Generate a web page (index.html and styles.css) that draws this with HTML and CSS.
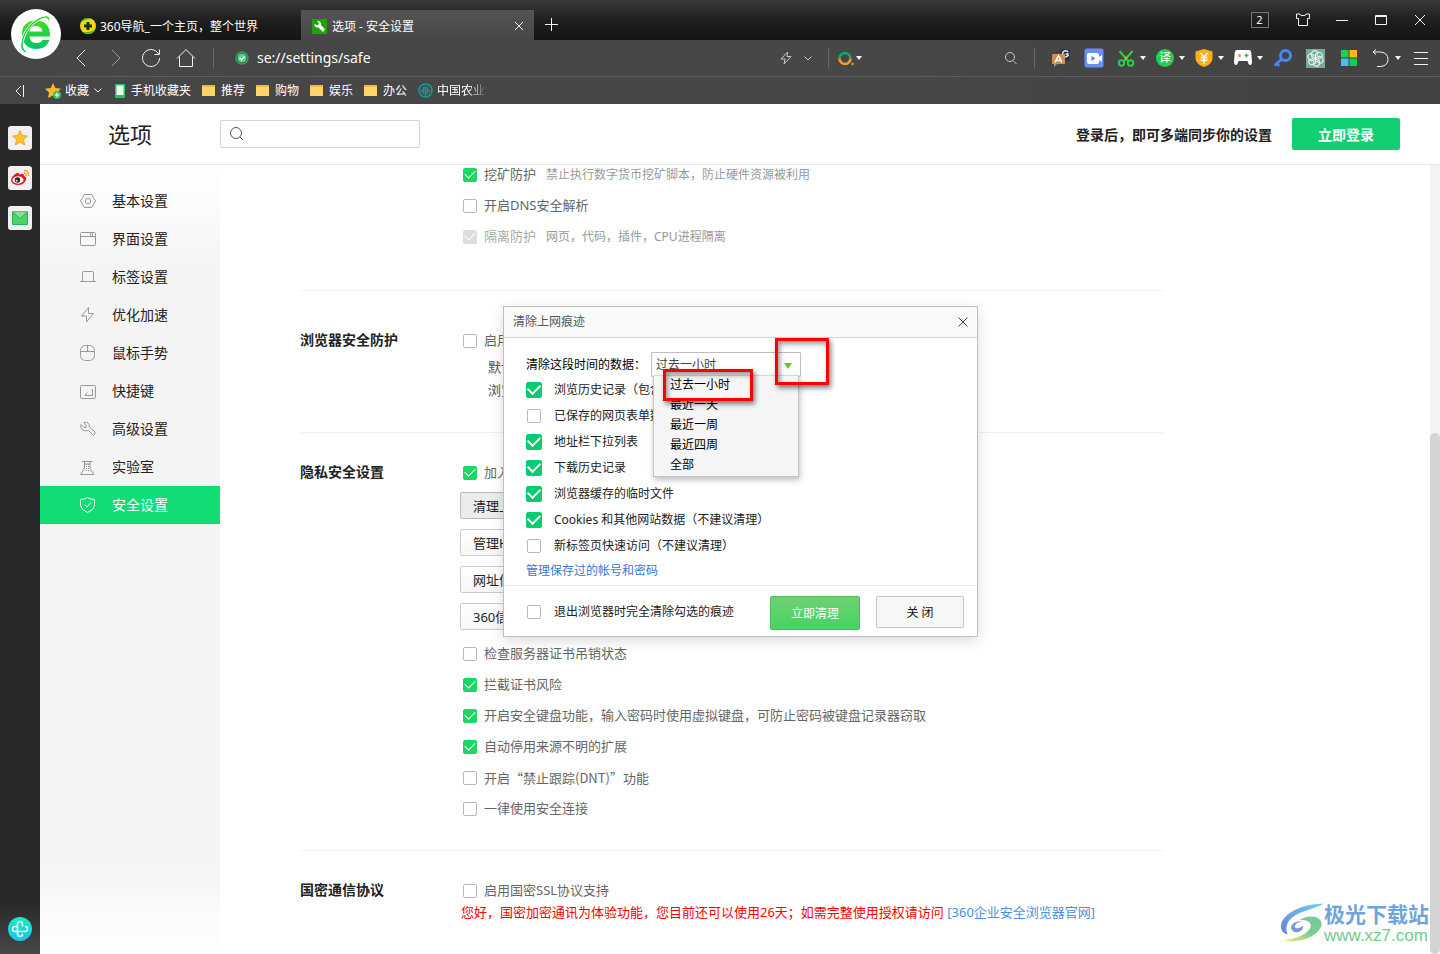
FILE: index.html
```html
<!DOCTYPE html>
<html lang="zh-CN">
<head>
<meta charset="utf-8">
<title>选项 - 安全设置</title>
<link rel="stylesheet" href="styles.css">
</head>
<body>
<header class="chrome">
  <div class="tabbar">
    <div class="brand">
      <svg width="50" height="50" viewBox="0 0 50 50"><defs><linearGradient id="eg" x1="0" y1="0" x2="0" y2="1"><stop offset="0" stop-color="#3fdc1f"/><stop offset="1" stop-color="#00c864"/></linearGradient></defs><circle cx="25" cy="25" r="25" fill="#fff"/><path d="M11 25C11 16 17 11.500 25 11.500C33.500 11.500 39.500 17 39 27.500H18.500C19 32 21.500 34 25.500 34C28.500 34 30.500 33 31.500 31H38.500C36.500 37 31.500 40 25.500 40C16.500 40 11 34 11 25ZM18.500 22.500H31.500C31 19 29 17 25 17C21.500 17 19 19 18.500 22.500Z" fill="url(#eg)"/><path d="M36.500 15C38.500 9 35 8 30 10.500C21 14.500 14 24 12.500 32C11.500 38 13 42 17.500 43C10.500 45 8.500 39 10.500 31C13 20 22 10.500 31 7.500C38.500 5 40.500 9 36.500 15Z" fill="url(#eg)" stroke="#fff" stroke-width="1"/></svg>
    </div>
    <div class="tab">
      <svg width="16" height="16" viewBox="0 0 16 16"><circle cx="8" cy="8" r="8" fill="#f7d51d"/><path d="M1 4A8 8 0 0 1 11 0.500Q5 1 1 4ZM3 14A8 8 0 0 0 15 11Q10 15 3 14Z" fill="#3fb41c"/><path d="M6.500 4H9.500V6.500H12V9.500H9.500V12H6.500V9.500H4V6.500H6.500Z" fill="#153b14"/></svg>
      <span>360导航_一个主页，整个世界</span>
    </div>
    <div class="tab tab-active">
      <svg width="15" height="15" viewBox="0 0 15 15"><rect width="15" height="15" fill="#1fa30c"/><path d="M2.500 4.500L4.500 6.500L6.500 5.500L6.500 3.500L5 2C8 1.500 9.500 3.500 9 6L13 10.500L11 13L6.500 8.500C4 9 2 7.500 2.500 4.500Z" fill="#fff"/></svg>
      <span class="tab-title">选项 - 安全设置</span>
      <button class="bare" aria-label="关闭标签"><svg width="10" height="10" viewBox="0 0 10 10" class="line"><path d="M1 1L9 9M9 1L1 9"/></svg></button>
    </div>
    <button class="bare new-tab" aria-label="新标签"><svg width="13" height="13" viewBox="0 0 13 13" class="line"><path d="M6.500 0V13M0 6.500H13"/></svg></button>
    <div class="window-buttons">
      <button class="bare" aria-label="标签数"><span class="tab-count">2</span></button>
      <button class="bare" aria-label="皮肤"><svg width="16" height="14" viewBox="0 0 16 14" class="line"><path d="M5 1H1.500V5.500H3.500V12.500H12.500V5.500H14.500V1H11L10 2.500H6Z"/></svg></button>
      <button class="bare" aria-label="最小化"><svg width="12" height="12" viewBox="0 0 12 12" class="line"><path d="M0 6.500H12"/></svg></button>
      <button class="bare" aria-label="最大化"><svg width="12" height="10" viewBox="0 0 12 10" class="line"><path d="M.5 .5H11.500V9.500H.5ZM0 1.500H12"/></svg></button>
      <button class="bare" aria-label="关闭"><svg width="12" height="12" viewBox="0 0 12 12" class="line"><path d="M1 1L11 11M11 1L1 11"/></svg></button>
    </div>
  </div>

  <div class="navbar">
    <button class="bare nav-btn" aria-label="后退"><svg width="12" height="18" viewBox="0 0 12 18" class="line"><path d="M10 1L2 9L10 17"/></svg></button>
    <button class="bare nav-btn dim" aria-label="前进"><svg width="12" height="18" viewBox="0 0 12 18" class="line"><path d="M2 1L10 9L2 17"/></svg></button>
    <button class="bare nav-btn" aria-label="刷新"><svg width="20" height="20" viewBox="0 0 20 20" class="line"><path d="M18.500 10A8.500 8.500 0 1 1 16 4L18 6M18.500 1.500V6.500H13.500"/></svg></button>
    <button class="bare nav-btn" aria-label="主页"><svg width="20" height="20" viewBox="0 0 20 20" class="line"><path d="M1 10.500L10 1.500L19 10.500M3.500 8.500V18.500H16.500V8.500"/></svg></button>
    <span class="sep"></span>
    <div class="address">
      <svg width="14" height="14" viewBox="0 0 14 14"><circle cx="7" cy="7" r="6" fill="none" stroke="#3c9c62" stroke-width="1.500"/><circle cx="7" cy="7" r="4.500" fill="#56d488"/><path d="M4.800 7L6.500 8.700L9.400 5.500" fill="none" stroke="#fff" stroke-width="1.300"/></svg>
      <input class="address-input" aria-label="地址" value="se://settings/safe">
      <svg width="12" height="14" viewBox="0 0 12 14" class="line soft"><path d="M7.500 1L1 8H5L4 13L11 5.500H7Z"/></svg>
      <svg width="8" height="5" viewBox="0 0 8 5" class="line soft"><path d="M.5 .5L4 4L7.500 .5"/></svg>
    </div>
    <span class="sep"></span>
    <div class="web-search">
      <svg width="16" height="15" viewBox="0 0 16 15"><path d="M1.500 7.500A5.500 5.500 0 0 1 12.500 7.500" fill="none" stroke="#17a862" stroke-width="2.600"/><path d="M1.500 7.500A5.500 5.500 0 0 0 12.500 7.500" fill="none" stroke="#ff9a2e" stroke-width="2.600"/><circle cx="14.500" cy="13" r="1.200" fill="#ff9a2e"/></svg>
      <i class="caret"></i>
      <svg class="line soft search-end" width="12" height="13" viewBox="0 0 12 13"><circle cx="5" cy="5" r="4.500"/><path d="M8 8.500L11.500 12"/></svg>
    </div>
    <span class="sep"></span>
    <div class="extensions">
      <button class="bare ext" aria-label="翻译"><svg width="20" height="20" viewBox="0 0 20 20"><rect x="9" y="1" width="10" height="12" rx="2" fill="#26354c"/><path d="M17 4A3 3 0 1 0 17 7.500V6H14.500" fill="none" stroke="#dfe5ec" stroke-width="1.600"/><path d="M2 6H14V16H6L3 19V16H1V7Z" fill="#cf8c55"/><path d="M4 14.500L7.500 7.500L11 14.500M5.500 12.500H9.500" fill="none" stroke="#fff" stroke-width="1.600"/></svg></button>
      <button class="bare ext" aria-label="视频"><svg width="20" height="20" viewBox="0 0 20 20"><rect x=".5" y=".5" width="19" height="19" rx="2" fill="#6a90f5"/><rect x="3" y="5" width="12" height="11" rx="2" fill="#fff"/><path d="M15 9L18 7V14L15 12Z" fill="#fff"/><path d="M7.500 8L11.500 10.500L7.500 13Z" fill="#5b84f0"/></svg></button>
      <button class="bare ext ext-menu" aria-label="截图"><svg width="20" height="20" viewBox="0 0 20 20"><g fill="none" stroke="#29cf45" stroke-width="2"><path d="M3.500 3L12.500 13.500M16.500 3L7.500 13.500"/><circle cx="5.500" cy="15" r="2.700"/><circle cx="14.500" cy="15" r="2.700"/></g><circle cx="10" cy="10" r="1.200" fill="#e2b731"/></svg><i class="caret"></i></button>
      <button class="bare ext ext-menu" aria-label="网页翻译"><span class="round-yi">译</span><i class="caret"></i></button>
      <button class="bare ext ext-menu" aria-label="网银"><svg width="20" height="20" viewBox="0 0 20 20"><path d="M10 1L18.500 3.500V11Q18 16 10 19Q2 16 1.500 11V3.500Z" fill="#fdae1c"/><path d="M6.500 5L10 9L13.500 5M10 9V15.500M6.500 9.500H13.500M6.500 12.300H13.500" fill="none" stroke="#fff" stroke-width="1.500"/></svg><i class="caret"></i></button>
      <button class="bare ext ext-menu" aria-label="游戏"><svg width="20" height="20" viewBox="0 0 20 20"><path d="M4 2H16Q18 2 18.300 5L19 14Q19 17 17 17Q15.500 17 14.500 13H5.500Q4.500 17 3 17Q1 17 1 14L1.700 5Q2 2 4 2Z" fill="#fff"/><circle cx="6.500" cy="7.500" r="1.500" fill="#f29a2c"/><path d="M13.500 5.500V9.500M11.500 7.500H15.500" stroke="#28bf55" stroke-width="1.300"/></svg><i class="caret"></i></button>
      <button class="bare ext" aria-label="密码"><svg width="20" height="20" viewBox="0 0 20 20"><circle cx="12.500" cy="7.500" r="5" fill="none" stroke="#4a86f7" stroke-width="3"/><path d="M9 11L1.500 17.500M4 15.500L6 18" stroke="#4a86f7" stroke-width="2.800"/></svg></button>
      <button class="bare ext" aria-label="AI 助手"><svg width="19" height="19" viewBox="0 0 19 19"><rect width="19" height="19" fill="#75a99b"/><g fill="none" stroke="#e9f4f0" stroke-width="1.100"><path id="petal" d="M9.500 9.500V5L13 3.200Q16.500 3.500 16.300 7.500L12 10"/><use href="#petal" transform="rotate(60 9.500 9.500)"/><use href="#petal" transform="rotate(120 9.500 9.500)"/><use href="#petal" transform="rotate(180 9.500 9.500)"/><use href="#petal" transform="rotate(240 9.500 9.500)"/><use href="#petal" transform="rotate(300 9.500 9.500)"/></g></svg></button>
      <button class="bare ext" aria-label="应用"><svg width="16" height="16" viewBox="0 0 16 16"><path d="M0 0H7.500V7.500H0Z" fill="#22d04a"/><path d="M8.500 0H16V7.500H8.500Z" fill="#ffb816"/><path d="M0 8.500H7.500V16H0Z" fill="#49bdf0"/><path d="M8.500 8.500H16V16H8.500Z" fill="#15c95e"/></svg></button>
      <button class="bare ext ext-menu" aria-label="恢复"><svg width="20" height="20" viewBox="0 0 20 20" class="line"><path d="M5 1.500L2 4L5 6.500M2 4H10Q17 5 17 11.500Q17 17.500 10 18.500H6"/></svg><i class="caret"></i></button>
      <button class="bare ext" aria-label="菜单"><svg width="14" height="14" viewBox="0 0 14 14" class="line"><path d="M0 1.500H14M0 7.500H14M0 13.500H14"/></svg></button>
    </div>
  </div>

  <nav class="bookmarks">
    <button class="bare fold" aria-label="收起"><svg width="10" height="12" viewBox="0 0 10 12" class="line"><path d="M6 1L1 6L6 11M8.500 0V12"/></svg></button>
    <a class="mark mark-fav" href="#"><svg width="16" height="16" viewBox="0 0 16 16"><path d="M8 0L10.300 5L16 5.700L12 9.500L13 15L8 12.500L3 15L4 9.500L0 5.700L5.700 5Z" fill="#fdb827"/><circle cx="12" cy="12" r="4" fill="#2bc462"/><path d="M12 9.700V14.300M9.700 12H14.300" stroke="#fff" stroke-width="1.200"/></svg>收藏<svg width="8" height="5" viewBox="0 0 8 5" class="line"><path d="M.5 .5L4 4L7.500 .5"/></svg></a>
    <a class="mark" href="#"><svg width="10" height="14" viewBox="0 0 10 14"><rect width="10" height="14" rx="1" fill="#1fc960"/><rect x="1.500" y="1.500" width="7" height="9.500" fill="#effff2"/></svg>手机收藏夹</a>
    <a class="mark" href="#"><i class="folder"></i>推荐</a>
    <a class="mark" href="#"><i class="folder"></i>购物</a>
    <a class="mark" href="#"><i class="folder"></i>娱乐</a>
    <a class="mark" href="#"><i class="folder"></i>办公</a>
    <a class="mark mark-last" href="#"><svg width="15" height="15" viewBox="0 0 15 15"><g fill="none" stroke="#159a93" stroke-width="1.500"><circle cx="7.500" cy="7.500" r="6.500"/><path d="M7.500 3V14M5.500 4V11M9.500 4V11M3.500 6.500V9.500M11.500 6.500V9.500"/></g></svg>中国农业</a>
  </nav>
</header>

<div class="workspace">
  <aside class="rail">
    <button class="rail-btn" aria-label="收藏"><svg width="16" height="16" viewBox="0 0 16 16"><path d="M8 .5L10.300 5.500L15.500 6L11.500 9.700L12.700 15L8 12.300L3.300 15L4.500 9.700L.5 6L5.700 5.500Z" fill="#ffc629" stroke="#f59a23" stroke-width=".8"/></svg></button>
    <button class="rail-btn" aria-label="微博"><svg width="20" height="18" viewBox="0 0 20 18"><path d="M7 4Q9 3 9 5.500Q14 3.500 14 7Q17 8 16 11Q14 16 8 16Q1 15.500 1 11Q1.500 7 7 4Z" fill="#e5171f"/><ellipse cx="8" cy="11" rx="5.500" ry="3.700" fill="#fff"/><circle cx="7.500" cy="11" r="2.700" fill="#222"/><circle cx="6.700" cy="11.700" r=".9" fill="#fff"/><path d="M14 1.500Q19 1.500 18.500 7M14 4Q16.500 4 16 7" fill="none" stroke="#f6a12b" stroke-width="1.400"/></svg></button>
    <button class="rail-btn" aria-label="邮件"><svg width="16" height="14" viewBox="0 0 16 14"><rect width="16" height="14" rx="1" fill="#4fd06c"/><path d="M.5 1H15.500L8 7.500Z" fill="#7fe292"/><path d="M.5 1L8 7.500L15.500 1M.5 1V13.500H15.500V1" fill="none" stroke="#2bb452"/></svg></button>
    <button class="bare rail-foot" aria-label="健康"><svg width="24" height="24" viewBox="0 0 24 24"><defs><linearGradient id="cg" x1="0" y1="0" x2="0" y2="1"><stop offset="0" stop-color="#18eec0"/><stop offset="1" stop-color="#23bdea"/></linearGradient></defs><circle cx="12" cy="12" r="12" fill="url(#cg)"/><path d="M14.500 9.500V7Q14.500 4.500 12 4.500Q9.500 4.500 9.500 7V17Q9.500 19.500 12 19.500Q14.500 19.500 14.500 17M9.500 9.500H7Q4.500 9.500 4.500 12Q4.500 14.500 7 14.500H17Q19.500 14.500 19.500 12Q19.500 9.500 17 9.500" fill="none" stroke="#fff" stroke-width="1.500"/></svg></button>
  </aside>

  <main class="page">
    <header class="page-head">
      <h1 class="page-title">选项</h1>
      <label class="find"><svg width="14" height="14" viewBox="0 0 14 14"><circle cx="6" cy="6" r="5.500"/><path d="M10 10L13 13"/></svg><input class="find-input" aria-label="搜索设置"></label>
      <span class="sync-note">登录后，即可多端同步你的设置</span>
      <button class="login">立即登录</button>
    </header>

    <div class="page-body">
      <nav class="side">
        <a class="side-item" href="#"><svg width="16" height="16" viewBox="0 0 16 16"><path d="M4.500 1.500H11.500L15.500 8L11.500 14.500H4.500L.5 8Z"/><circle cx="8" cy="8" r="2.700"/></svg>基本设置</a>
        <a class="side-item" href="#"><svg width="16" height="16" viewBox="0 0 16 16"><rect x=".5" y="1.500" width="15" height="13" rx="1"/><path d="M1 5.500H15M10.500 2V5M12.500 2V5"/></svg>界面设置</a>
        <a class="side-item" href="#"><svg width="16" height="16" viewBox="0 0 16 16"><path d="M2.500 12V3.500Q2.500 2.500 3.500 2.500H12.500Q13.500 2.500 13.500 3.500V12M0 12.500H16"/></svg>标签设置</a>
        <a class="side-item" href="#"><svg width="16" height="16" viewBox="0 0 16 16"><path d="M8.500 .5L1.500 9H6.500V15L13.500 6.500H8.500Z"/></svg>优化加速</a>
        <a class="side-item" href="#"><svg width="16" height="16" viewBox="0 0 16 16"><rect x=".5" y=".5" width="14" height="15" rx="5"/><path d="M.5 6.500H14.500M7.500 .5V6.500"/></svg>鼠标手势</a>
        <a class="side-item" href="#"><svg width="16" height="16" viewBox="0 0 16 16"><rect x=".5" y="2.500" width="15" height="13" rx="1"/><path d="M12.500 6V12.500H5M7.500 9.500L4.500 12.500"/></svg>快捷键</a>
        <a class="side-item" href="#"><svg width="16" height="16" viewBox="0 0 16 16"><path d="M4 1.500Q9 0 9.500 6L15 11Q15.500 13 13.500 14.500L8.500 9.500Q4 11 1.500 8Q0 5.500 1 3.500L4 6.500H6V4.500Z"/></svg>高级设置</a>
        <a class="side-item" href="#"><svg width="16" height="16" viewBox="0 0 16 16"><path d="M2 2.500H12.500M4.500 3V5H10V3M4.500 5V8.500Q4.500 10 3.500 11L.5 15.500H14L11 11Q10 10 10 8.500V5"/><path d="M6.500 5V12M8.500 5V12" stroke-dasharray="1 1"/></svg>实验室</a>
        <a class="side-item side-on" href="#"><svg width="16" height="16" viewBox="0 0 16 16"><path d="M7.500 .5Q10.500 2.500 14.500 2.500V8.500Q14 13 7.500 15.500Q1 13 .5 8.500V2.500Q4.500 2.500 7.500 .5ZM4.500 7.500L7 10L11 5.500"/></svg>安全设置</a>
      </nav>

      <div class="content">
        <section class="group group-first">
          <h2 class="group-title"></h2>
          <div class="rows">
            <div class="row"><label class="opt"><input type="checkbox" checked>挖矿防护</label><span class="hint">禁止执行数字货币挖矿脚本，防止硬件资源被利用</span></div>
            <label class="opt"><input type="checkbox">开启DNS安全解析</label>
            <div class="row"><label class="opt opt-off"><input type="checkbox" checked disabled>隔离防护</label><span class="hint">网页，代码，插件，CPU进程隔离</span></div>
          </div>
        </section>

        <section class="group group-browser">
          <h2 class="group-title">浏览器安全防护</h2>
          <div class="rows">
            <label class="opt"><input type="checkbox">启用</label>
            <p class="detail">默认<br>浏览</p>
          </div>
        </section>

        <section class="group">
          <h2 class="group-title">隐私安全设置</h2>
          <div class="rows">
            <label class="opt"><input type="checkbox" checked>加入</label>
            <div class="actions">
              <button class="action action-on">清理上</button>
              <button class="action">管理H</button>
              <button class="action">网址信</button>
              <button class="action">360信</button>
            </div>
            <label class="opt"><input type="checkbox">检查服务器证书吊销状态</label>
            <label class="opt"><input type="checkbox" checked>拦截证书风险</label>
            <label class="opt"><input type="checkbox" checked>开启安全键盘功能，输入密码时使用虚拟键盘，可防止密码被键盘记录器窃取</label>
            <label class="opt"><input type="checkbox" checked>自动停用来源不明的扩展</label>
            <label class="opt opt-cjk"><input type="checkbox">开启“禁止跟踪(DNT)”功能</label>
            <label class="opt"><input type="checkbox">一律使用安全连接</label>
          </div>
        </section>

        <section class="group group-last">
          <h2 class="group-title">国密通信协议</h2>
          <div class="rows">
            <label class="opt"><input type="checkbox">启用国密SSL协议支持</label>
            <p class="warn">您好，国密加密通讯为体验功能，您目前还可以使用26天；如需完整使用授权请访问 <a href="#">[360企业安全浏览器官网]</a></p>
          </div>
        </section>
      </div>
      <div class="scroll"><div class="scroll-thumb"></div></div>
    </div>

    <div class="dialog" role="dialog" aria-labelledby="dlg-title">
      <div class="dialog-head"><span id="dlg-title">清除上网痕迹</span><button class="bare" aria-label="关闭对话框"><svg width="10" height="10" viewBox="0 0 10 10" class="line"><path d="M.5 .5L9.500 9.500M9.500 .5L.5 9.500"/></svg></button></div>
      <div class="dialog-body">
        <div class="range">
          <label for="range">清除这段时间的数据：</label>
          <div class="range-box">
            <select id="range" class="range-select"><option>过去一小时</option></select>
            <i class="range-arrow"></i>
            <ul class="menu"><li>过去一小时</li><li>最近一天</li><li>最近一周</li><li>最近四周</li><li>全部</li></ul>
            <div class="callout callout-item"></div>
            <div class="callout callout-arrow"></div>
          </div>
        </div>
        <label class="check"><input type="checkbox" checked>浏览历史记录（包含</label>
        <label class="check"><input type="checkbox">已保存的网页表单数</label>
        <label class="check"><input type="checkbox" checked>地址栏下拉列表</label>
        <label class="check"><input type="checkbox" checked>下载历史记录</label>
        <label class="check"><input type="checkbox" checked>浏览器缓存的临时文件</label>
        <label class="check"><input type="checkbox" checked>Cookies 和其他网站数据（不建议清理）</label>
        <label class="check"><input type="checkbox">新标签页快速访问（不建议清理）</label>
        <a class="accounts" href="#">管理保存过的帐号和密码</a>
      </div>
      <div class="dialog-foot">
        <label class="check"><input type="checkbox">退出浏览器时完全清除勾选的痕迹</label>
        <button class="clear">立即清理</button>
        <button class="cancel">关 闭</button>
      </div>
    </div>

    <div class="watermark">
      <svg width="44" height="42" viewBox="0 0 46 42"><defs><linearGradient id="w1" x1="0" y1="1" x2="1" y2="0"><stop offset="0" stop-color="#6d83d0"/><stop offset="1" stop-color="#6fcdf5"/></linearGradient><linearGradient id="w2" x1="0" y1="1" x2="1" y2="0"><stop offset="0" stop-color="#e9ee6a"/><stop offset=".5" stop-color="#7fcf8d"/><stop offset="1" stop-color="#6cc99a"/></linearGradient></defs><path d="M46 1C22 1 0 12 1 26C1.500 30 4 32 8 33C4 24 9 15 22 10C31 6.500 38 5 46 1Z" fill="url(#w1)"/><path d="M20 18C34 10 46 16 43 25C39 35 20 43 4 39C18 38 30 32 32 25C33 20 28 17 20 18Z" fill="url(#w2)"/><path d="M25 20C14 17 8 25 14 30C19 32 25 29 24 24C20 28 14 27 16 23C18 20 21 20 25 20Z" fill="#7b97d8"/></svg>
      <div class="watermark-text"><span class="watermark-name">极光下载站</span><span class="watermark-url">www.xz7.com</span></div>
    </div>
  </main>
</div>
</body>
</html>
```
FILE: styles.css
```css
* { box-sizing: border-box; }
body {
  margin: 0; height: 100vh; display: flex; flex-direction: column; overflow: hidden;
  font-family: "Noto Sans", "Noto Sans CJK SC", sans-serif; font-size: 12px; color: #222; background: #fff;
}
button, input, select { font-family: inherit; font-size: inherit; }
h1, h2, p, ul { margin: 0; padding: 0; }
a { text-decoration: none; color: inherit; }
svg { flex: none; display: block; }
.bare { border: 0; padding: 0; background: none; color: #fff; display: flex; align-items: center; justify-content: center; }
.line { fill: none; stroke: #f2f2f2; stroke-width: 1; }
.soft { stroke: #c8c8c8; }
.caret { border: 3px solid transparent; border-top: 4px solid #fff; border-bottom: 0; }

/* Browser chrome */
.chrome { flex: none; color: #fff; background: linear-gradient(90deg, #464647, #474747 60%, #424243); }
.tabbar { position: relative; display: flex; height: 40px; padding: 0 1px 0 70px; background: linear-gradient(#39393b, #1f1f20 50%, #151516); }
.brand { position: absolute; left: 11px; top: 9px; z-index: 2; }
.tab { display: flex; align-items: center; gap: 4px; width: 231px; height: 30px; margin-top: 10px; padding: 2px 10px 0; }
.tab-active { width: 233px; padding-left: 11px; background: linear-gradient(#545456, #474748); gap: 5px; }
.tab-title { flex: 1; }
.new-tab { width: 34px; height: 28px; margin-top: 10px; }
.window-buttons { display: flex; margin-left: auto; }
.window-buttons .bare { width: 39px; }
.window-buttons .bare:first-child { margin-right: 4px; }
.tab-count { width: 18px; height: 16px; border: 1px solid #777; line-height: 14px; font-size: 11px; }

.navbar { display: flex; align-items: center; height: 36px; padding: 0 3px 0 63px; }
.nav-btn { width: 35px; height: 36px; }
.dim { opacity: .5; }
.sep { width: 1px; height: 20px; background: #6a6a6b; }
.nav-btn + .sep { margin-left: 10px; }
.address { flex: 1; display: flex; align-items: center; gap: 8px; padding: 0 16px 0 21px; }
.address-input { flex: 1; min-width: 0; border: 0; padding: 0; background: none; color: #fff; font-size: 14px; line-height: 20px; outline: 0; }
.address .line + .line { margin-left: 4px; }
.web-search { display: flex; align-items: center; gap: 2px; width: 205px; padding: 0 17px 0 9px; }
.search-end { margin-left: auto; }
.extensions { display: flex; margin-left: 9px; }
.ext { width: 33px; height: 36px; }
.ext-menu { width: 39px; justify-content: flex-start; gap: 4px; padding-left: 6px; }
.round-yi { width: 18px; height: 18px; margin: 0 1px; border-radius: 50%; background: #24cf50; line-height: 18px; }

.bookmarks { display: flex; align-items: center; height: 28px; padding-left: 15px; gap: 8px; border-top: 1px solid #5d5d5e; }
.fold { width: 10px; margin-right: 12px; }
.mark { display: flex; align-items: center; gap: 6px; line-height: 26px; margin-right: 3px; }
.mark-fav { gap: 5px; margin-right: 5px; }
.mark-fav svg:first-child { margin-right: -1px; }
.folder { width: 13px; height: 11px; border-top: 2px solid #f6b63a; background: #ffd469; }
.mark-last { width: 69px; gap: 4px; overflow: hidden; white-space: nowrap; -webkit-mask-image: linear-gradient(90deg, #000 75%, transparent); mask-image: linear-gradient(90deg, #000 75%, transparent); }

/* Workspace */
.workspace { flex: 1; min-height: 0; display: flex; }
.rail { flex: none; width: 40px; display: flex; flex-direction: column; align-items: center; gap: 16px; padding: 22px 0 13px; background: linear-gradient(#29292a 94%, #48484a); }
.rail-btn { display: flex; align-items: center; justify-content: center; width: 24px; height: 24px; padding: 0; border: 0; border-radius: 3px; background: #f1f1f1; }
.rail-foot { margin-top: auto; }
.page { position: relative; flex: 1; min-width: 0; display: flex; flex-direction: column; }
.page-head { flex: none; display: flex; align-items: center; height: 61px; padding: 0 40px 0 68px; border-bottom: 1px solid #e6e6e6; }
.page-title { width: 112px; font-size: 22px; line-height: 30px; font-weight: 400; }
.find { display: flex; align-items: center; width: 200px; height: 28px; padding: 0 9px; gap: 8px; border: 1px solid #d4d4d4; border-radius: 2px; }
.find svg { fill: none; stroke: #555; }
.find-input { flex: 1; min-width: 0; border: 0; outline: 0; }
.sync-note { margin-left: auto; font-size: 14px; font-weight: 700; }
.login { width: 108px; height: 32px; margin-left: 20px; border: 0; border-radius: 2px; background: #10cf73; color: #fff; font-size: 14px; font-weight: 700; }

.page-body { flex: 1; min-height: 0; display: flex; }
.side { flex: none; width: 180px; padding-top: 17px; background: linear-gradient(#fff, #f4f4f4 110px, #f4f4f4 88%, #fff); }
.side-item { display: flex; align-items: center; gap: 16px; height: 38px; padding-left: 40px; font-size: 14px; line-height: 18px; }
.side-item svg { fill: none; stroke: #999; }
.side-on { background: #12dd74; color: #fff; }
.side-item.side-on svg { stroke: #fff; }

.content { flex: 1; min-width: 0; padding-left: 80px; overflow: hidden; }
.group { display: flex; max-width: 864px; padding: 30px 0 32px; border-bottom: 1px solid #f0f0f0; }
.group-first { padding: 0 0 44px; }
.group-browser { padding: 40px 0 30px; }
.group-last { border-bottom: 0; }
.group-title { flex: none; width: 160px; font-size: 14px; line-height: 18px; font-weight: 700; }
.rows { display: flex; flex-direction: column; align-items: flex-start; gap: 12px; }
.row { display: flex; gap: 10px; }
.opt { display: flex; align-items: center; gap: 7px; padding-left: 3px; font-size: 13px; line-height: 19px; color: #666; white-space: nowrap; }
.opt-cjk { font-family: "Noto Sans CJK SC", sans-serif; }
.opt-off { color: #aaa; }
.hint { color: #999; line-height: 19px; }
input[type="checkbox"] { appearance: none; flex: none; display: grid; place-content: center; width: 14px; height: 14px; margin: 0; border: 1px solid #b8b8b8; border-radius: 2px; background: #fff; }
input[type="checkbox"]:checked { border-color: #1bd765; background: #1bd765; }
input[type="checkbox"]:checked::after { content: ""; width: 9px; height: 5px; margin-bottom: 3px; border: solid #fff; border-width: 0 0 1px 1px; transform: rotate(-45deg); }
input[type="checkbox"]:disabled { border-color: #ddd; background: #ddd; }
.detail { padding-left: 28px; font-size: 13px; line-height: 23px; color: #555; margin-top: -6px; }
.actions { display: flex; flex-direction: column; align-items: flex-start; gap: 10px; margin: -2px 0 2px; }
.action { min-width: 140px; height: 27px; padding: 0 12px; border: 1px solid #ccc; border-radius: 2px; background: linear-gradient(#fff, #f6f6f6); color: #222; font-size: 13px; text-align: left; }
.action-on { background: #ececec; border-color: #bbb; }
.warn { margin-top: -9px; padding-left: 1px; font-size: 13px; line-height: 19px; color: #f00; white-space: nowrap; }
.warn a { color: #4a90e2; }
.scroll { flex: none; width: 10px; display: flex; flex-direction: column; justify-content: flex-end; background: #f3f3f3; }
.scroll-thumb { height: 66%; border-radius: 5px; background: #d4d4d4; }

/* Clear-data dialog */
.dialog { position: absolute; top: 202px; left: 50%; margin-left: -237px; width: 475px; border: 1px solid #bfbfbf; background: #fff; box-shadow: 0 4px 14px rgba(0, 0, 0, .14); line-height: 16px; }
.dialog-head { display: flex; align-items: center; justify-content: space-between; height: 31px; padding: 0 9px; border-bottom: 1px solid #d6d6d6; background: #fafafa; color: #555; }
.dialog-head .line { stroke: #444; }
.dialog-body { display: flex; flex-direction: column; align-items: flex-start; padding: 14px 22px 2px; }
.range { display: flex; align-items: center; height: 25px; color: #000; }
.range label { width: 125px; }
.range-box { position: relative; display: flex; }
.range-select { appearance: none; width: 150px; height: 25px; padding: 0 4px; border: 1px solid #bdbdc8; border-radius: 1px; background: #fff; color: #444; }
.range-arrow { position: absolute; right: 9px; top: 11px; border: 4px solid transparent; border-top: 6px solid #5ecb1d; border-bottom: 0; }
.menu { position: absolute; z-index: 1; left: 2px; top: 23px; width: 146px; list-style: none; border: 1px solid #c4c4c4; border-top-color: #d8d8d8; background: #f6f6f6; box-shadow: 1px 3px 6px rgba(0, 0, 0, .25); }
.menu li { height: 20px; padding-left: 16px; line-height: 18px; color: #000; }
.callout { position: absolute; z-index: 2; border: 3px solid #f00; box-shadow: 2px 3px 5px rgba(0, 0, 0, .5), inset 2px 3px 5px rgba(0, 0, 0, .4); pointer-events: none; }
.callout-item { left: 12px; top: 17px; width: 90px; height: 32px; }
.callout-arrow { left: 124px; top: -14px; width: 54px; height: 47px; }
.check { display: flex; align-items: center; gap: 12px; height: 26px; line-height: 18px; color: #222; }
.check input[type="checkbox"]:not(:checked) { margin: 0 1px; }
.check input[type="checkbox"]:checked { width: 16px; height: 16px; border-color: #05cd70; background: #05cd70; }
.check input[type="checkbox"]:checked::after { border-width: 0 0 2px 2px; width: 10px; height: 6px; margin-bottom: 4px; }
.accounts { line-height: 24px; color: #3a76d6; }
.dialog-foot { display: flex; align-items: flex-start; height: 51px; padding: 10px 13px 0 22px; border-top: 1px solid #e6e6e6; }
.dialog-foot .check { flex: 1; height: 32px; }
.clear { width: 90px; height: 34px; border: 1px solid #4dbb5d; border-radius: 2px; background: linear-gradient(#70d170, #45d364); color: #fff; }
.cancel { width: 88px; height: 32px; margin-left: 16px; border: 1px solid #c6c6c6; border-radius: 2px; background: #f7f7f7; color: #111; }

.watermark { position: absolute; right: 11px; bottom: 8px; display: flex; }
.watermark-text { display: flex; flex-direction: column; }
.watermark-name { font-size: 21px; line-height: 24px; font-weight: 700; color: #6fa4dc; }
.watermark-url { font-family: "Liberation Sans", Arial, sans-serif; font-size: 17px; line-height: 20px; color: #70cb8c; }
```
